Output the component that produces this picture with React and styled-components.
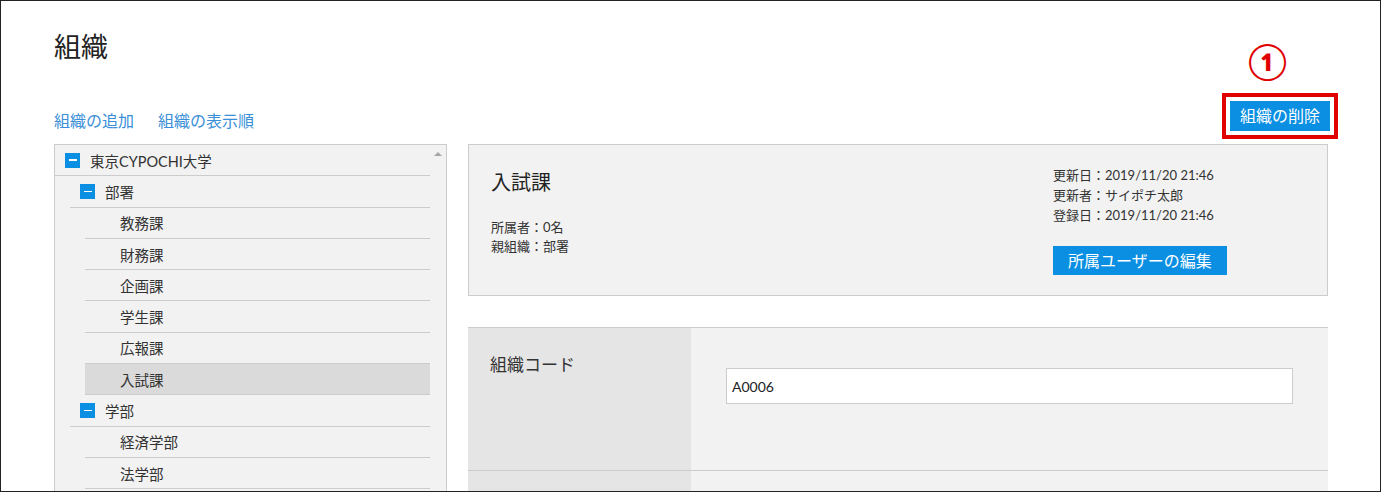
import React from 'react'
import styled, { createGlobalStyle } from 'styled-components'

const GlobalStyle = createGlobalStyle`
  html, body {
    margin: 0;
    padding: 0;
    background: #fff;
  }
  body {
    font-family: "Lato", "Noto Sans CJK JP", sans-serif;
    color: #333;
  }
  * { box-sizing: border-box; }
`;

const Frame = styled.div`
  width: 1381px;
  height: 492px;
  border: 1px solid #222;
  padding: 28px 52px 0 53px;
  overflow: hidden;
`;

const Title = styled.h1`
  margin: 0;
  font-size: 27px;
  line-height: 36px;
  font-weight: normal;
  color: #222;
`;

const Toolbar = styled.div`
  margin-top: 28px;
  display: flex;
  justify-content: space-between;
  align-items: flex-end;
`;

const Links = styled.div`
  display: flex;
  gap: 24px;
  margin-bottom: 8px;
`;

const Link = styled.a`
  font-size: 16px;
  line-height: 20px;
  color: #3a8fd8;
  text-decoration: none;
  cursor: pointer;
`;

const Callout = styled.div`
  position: relative;
  border: 4px solid #e00000;
  padding: 4px;
  margin-right: -10px;
`;

const CalloutNumber = styled.span`
  position: absolute;
  top: -57px;
  left: 22px;
  font-size: 35px;
  line-height: 40px;
  font-weight: bold;
  color: #e00000;
`;

const BlueButton = styled.button`
  display: block;
  border: none;
  margin: 0;
  background: #0b8fe2;
  color: #fff;
  font-family: inherit;
  font-size: ${p => p.$size || 16}px;
  height: ${p => p.$height || 30}px;
  line-height: ${p => p.$height || 30}px;
  padding: 0 ${p => p.$pad || 10}px;
  cursor: pointer;
`;

const Columns = styled.div`
  margin-top: 5px;
  display: flex;
  gap: 21px;
  align-items: flex-start;
`;

const TreePanel = styled.div`
  width: 393px;
  height: 400px;
  flex: none;
  display: flex;
  border: 1px solid #ccc;
  background: #f2f2f2;
`;

const TreeList = styled.div`
  flex: 1;
`;

const ScrollTrack = styled.div`
  width: 16px;
  flex: none;
  display: flex;
  justify-content: center;
  padding-top: 7px;
`;

const ScrollArrow = styled.div`
  width: 0;
  height: 0;
  border-left: 4px solid transparent;
  border-right: 4px solid transparent;
  border-bottom: 4px solid #a6a6a6;
`;

const TreeRow = styled.div`
  height: 31.3px;
  margin-left: ${p => p.$level * 15}px;
  padding-left: 10px;
  display: flex;
  align-items: center;
  gap: 10px;
  border-bottom: 1px solid #ccc;
  background: ${p => (p.$selected ? '#dadada' : 'transparent')};
  font-size: 14.5px;
  color: #333;
`;

const Toggle = styled.span`
  width: 15px;
  height: 15px;
  flex: none;
  background: ${p => (p.$hidden ? 'transparent' : '#0b8fe2')};
  display: flex;
  align-items: center;
  justify-content: center;
  &::after {
    content: '';
    display: ${p => (p.$hidden ? 'none' : 'block')};
    width: 8px;
    height: 1.5px;
    background: #fff;
  }
`;

const Main = styled.div`
  width: 860px;
  flex: none;
`;

const InfoCard = styled.div`
  height: 152px;
  border: 1px solid #ccc;
  background: #f2f2f2;
  padding: 20px 22px;
  display: flex;
  justify-content: space-between;
`;

const InfoLeft = styled.div`
  padding-top: 3px;
`;

const InfoTitle = styled.div`
  font-size: 20px;
  line-height: 28px;
  color: #222;
`;

const InfoLines = styled.div`
  margin-top: 22px;
  font-size: 13px;
  line-height: 19px;
  color: #333;
`;

const InfoRight = styled.div`
  width: 252px;
`;

const MetaLines = styled.div`
  font-size: 13px;
  line-height: 20px;
  color: #333;
  margin-bottom: 21px;
`;

const FormTable = styled.div`
  margin-top: 31px;
  border-top: 1px solid #ccc;
`;

const FormRow = styled.div`
  display: grid;
  grid-template-columns: 223px 1fr;
  min-height: 143px;
  border-bottom: 1px solid #ccc;
`;

const FormLabel = styled.div`
  background: #e5e5e5;
  padding: 25px 22px 0;
  font-size: 17px;
  line-height: 24px;
  color: #333;
`;

const FormValue = styled.div`
  background: #f2f2f2;
  padding: 40px 35px 0;
`;

const TextInput = styled.input`
  display: block;
  width: 100%;
  height: 36px;
  border: 1px solid #ccc;
  background: #fff;
  padding: 0 5px;
  font-family: inherit;
  font-size: 14px;
  color: #222;
  outline: none;
`;

const tree = [
  { label: '東京CYPOCHI大学', level: 0, toggle: true },
  { label: '部署', level: 1, toggle: true },
  { label: '教務課', level: 2 },
  { label: '財務課', level: 2 },
  { label: '企画課', level: 2 },
  { label: '学生課', level: 2 },
  { label: '広報課', level: 2 },
  { label: '入試課', level: 2, selected: true },
  { label: '学部', level: 1, toggle: true },
  { label: '経済学部', level: 2 },
  { label: '法学部', level: 2 },
];

export default function App() {
  return (
    <>
      <GlobalStyle />
      <Frame>
        <Title>組織</Title>
        <Toolbar>
          <Links>
            <Link>組織の追加</Link>
            <Link>組織の表示順</Link>
          </Links>
          <Callout>
            <CalloutNumber>①</CalloutNumber>
            <BlueButton>組織の削除</BlueButton>
          </Callout>
        </Toolbar>
        <Columns>
          <TreePanel>
            <TreeList>
              {tree.map((item, i) => (
                <TreeRow key={i} $level={item.level} $selected={item.selected}>
                  <Toggle $hidden={!item.toggle} />
                  {item.label}
                </TreeRow>
              ))}
            </TreeList>
            <ScrollTrack>
              <ScrollArrow />
            </ScrollTrack>
          </TreePanel>
          <Main>
            <InfoCard>
              <InfoLeft>
                <InfoTitle>入試課</InfoTitle>
                <InfoLines>
                  <div>所属者：0名</div>
                  <div>親組織：部署</div>
                </InfoLines>
              </InfoLeft>
              <InfoRight>
                <MetaLines>
                  <div>更新日：2019/11/20 21:46</div>
                  <div>更新者：サイポチ太郎</div>
                  <div>登録日：2019/11/20 21:46</div>
                </MetaLines>
                <BlueButton $height={29} $pad={15}>所属ユーザーの編集</BlueButton>
              </InfoRight>
            </InfoCard>
            <FormTable>
              <FormRow>
                <FormLabel>組織コード</FormLabel>
                <FormValue>
                  <TextInput defaultValue="A0006" />
                </FormValue>
              </FormRow>
              <FormRow>
                <FormLabel />
                <FormValue />
              </FormRow>
            </FormTable>
          </Main>
        </Columns>
      </Frame>
    </>
  )
}
